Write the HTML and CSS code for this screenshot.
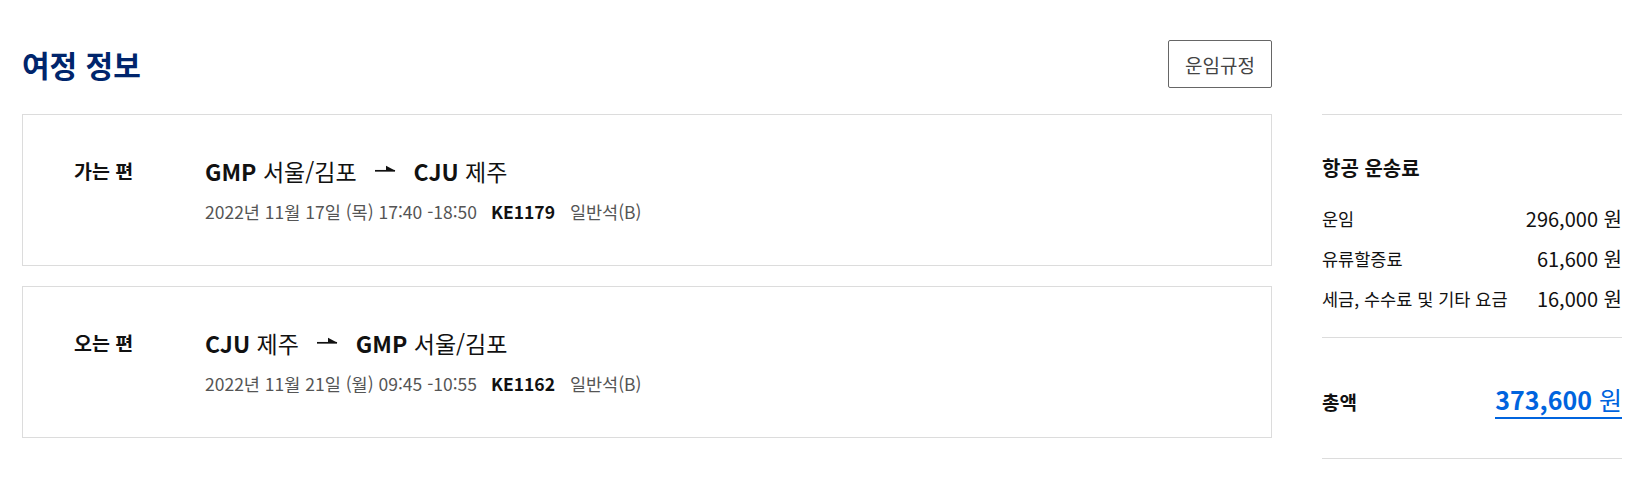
FILE: index.html
```html
<!DOCTYPE html>
<html lang="ko">
<head>
    <meta charset="UTF-8">
    <meta name="viewport" content="width=device-width, initial-scale=1.0">
    <title>여정 정보</title>
    <link rel="stylesheet" href="styles.css">
</head>
<body>
    <div class="page">
        <div class="title-row">
            <h2>여정 정보</h2>
            <button class="rule-button">운임규정</button>
        </div>
        <div class="content">
            <div class="segments">
                <div class="segment">
                    <div class="segment-label">가는 편</div>
                    <div class="segment-info">
                        <div class="route">
                            <span><b>GMP</b> 서울/김포</span>
                            <svg class="arrow" width="21" height="9" viewBox="0 0 21 9">
                                <path d="M0 6.8 H20" stroke="#111" stroke-width="1.7"/>
                                <path d="M11 1.8 L20.5 6.8 L11 6.8 Z" fill="#111"/>
                            </svg>
                            <span><b>CJU</b> 제주</span>
                        </div>
                        <div class="detail">
                            <span>2022년 11월 17일 (목) 17:40 -18:50</span>
                            <b class="flight">KE1179</b>
                            <span class="cabin">일반석(B)</span>
                        </div>
                    </div>
                </div>
                <div class="segment">
                    <div class="segment-label">오는 편</div>
                    <div class="segment-info">
                        <div class="route">
                            <span><b>CJU</b> 제주</span>
                            <svg class="arrow" width="21" height="9" viewBox="0 0 21 9">
                                <path d="M0 6.8 H20" stroke="#111" stroke-width="1.7"/>
                                <path d="M11 1.8 L20.5 6.8 L11 6.8 Z" fill="#111"/>
                            </svg>
                            <span><b>GMP</b> 서울/김포</span>
                        </div>
                        <div class="detail">
                            <span>2022년 11월 21일 (월) 09:45 -10:55</span>
                            <b class="flight">KE1162</b>
                            <span class="cabin">일반석(B)</span>
                        </div>
                    </div>
                </div>
            </div>
            <aside class="fare">
                <div class="fare-items">
                    <h3>항공 운송료</h3>
                    <div class="fare-row"><span>운임</span><span class="price">296,000 원</span></div>
                    <div class="fare-row"><span>유류할증료</span><span class="price">61,600 원</span></div>
                    <div class="fare-row"><span>세금, 수수료 및 기타 요금</span><span class="price">16,000 원</span></div>
                </div>
                <div class="fare-total">
                    <span class="total-label">총액</span>
                    <span class="total-amount"><b>373,600</b> 원</span>
                </div>
            </aside>
        </div>
    </div>
</body>
</html>
```

FILE: styles.css
```css
body {
    margin: 0;
    padding: 0;
    font-family: "Noto Sans CJK KR", "Noto Sans", sans-serif;
    color: #111;
    background: #fff;
}

.page {
    padding: 40px 0 0 22px;
}

.title-row {
    width: 1250px;
    display: flex;
    justify-content: space-between;
    align-items: center;
}

.title-row h2 {
    margin: 0;
    font-size: 30px;
    font-weight: bold;
    color: #00256c;
}

.rule-button {
    width: 104px;
    height: 48px;
    background: #fff;
    border: 1px solid #666;
    border-radius: 2px;
    font-family: inherit;
    font-size: 19px;
    color: #444;
    cursor: pointer;
}

.content {
    display: flex;
    gap: 50px;
    margin-top: 26px;
}

.segments {
    width: 1250px;
    display: flex;
    flex-direction: column;
    gap: 20px;
}

.segment {
    height: 152px;
    box-sizing: border-box;
    border: 1px solid #dcdcdc;
    padding: 42px 0 0 51px;
    display: flex;
}

.segment-label {
    width: 131px;
    font-size: 19.5px;
    font-weight: bold;
    line-height: 28px;
}

.route {
    display: flex;
    align-items: center;
    gap: 18px;
    font-size: 23px;
    line-height: 28px;
}

.arrow {
    margin-top: -5px;
}

.detail {
    margin-top: 16px;
    font-size: 17.5px;
    line-height: 22px;
    color: #555;
}

.flight {
    color: #111;
    margin-left: 9px;
}

.cabin {
    margin-left: 10px;
}

.fare {
    width: 300px;
    border-top: 1px solid #dcdcdc;
}

.fare-items {
    display: flex;
    flex-direction: column;
    gap: 14px;
    padding: 40px 0 25px;
    border-bottom: 1px solid #dcdcdc;
}

.fare-items h3 {
    margin: 0 0 11px;
    font-size: 20px;
    line-height: 26px;
}

.fare-row {
    display: flex;
    justify-content: space-between;
    align-items: center;
    font-size: 17.5px;
    line-height: 26px;
}

.price {
    font-size: 20px;
}

.fare-total {
    display: flex;
    justify-content: space-between;
    align-items: center;
    padding: 46px 0 39px;
    border-bottom: 1px solid #dcdcdc;
}

.total-label {
    font-size: 19px;
    font-weight: bold;
}

.total-amount {
    font-size: 25px;
    line-height: 30px;
    color: #0064de;
    padding-bottom: 3px;
    border-bottom: 2px solid #0064de;
}
```
